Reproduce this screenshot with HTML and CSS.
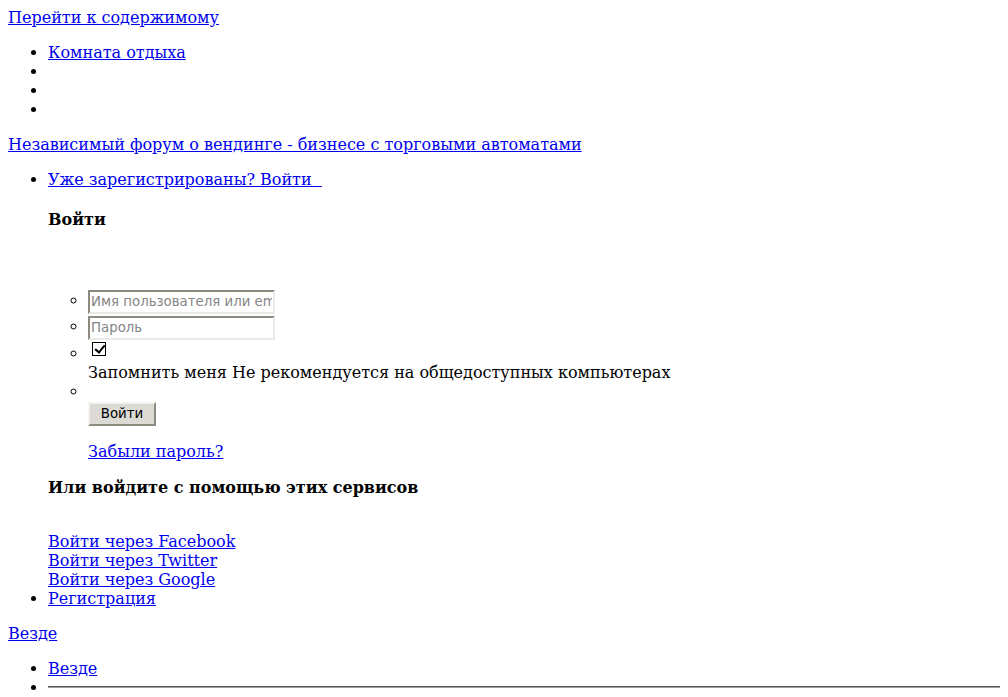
FILE: index.html
```html
<!DOCTYPE html>
<html lang="ru">
<head>
<meta charset="utf-8">
<title>Независимый форум о вендинге</title>
<link rel="stylesheet" href="styles.css">
</head>
<body class="page">
<a href="#main" class="skip-link">Перейти к содержимому</a>
<ul class="user-bar">
  <li><a href="#">Комната отдыха</a></li>
  <li></li>
  <li></li>
  <li></li>
</ul>
<a href="#" class="site-title">Независимый форум о вендинге - бизнесе с торговыми автоматами</a>
<ul class="account">
  <li>
    <a href="#">Уже зарегистрированы? Войти&nbsp;&nbsp;</a>
    <div class="login-menu">
      <h4 class="menu-title">Войти</h4>
      <form class="login-form">
        <ul class="fields">
          <li class="field-row"><input type="text" class="field" placeholder="Имя пользователя или email"></li>
          <li class="field-row"><input type="password" class="field" placeholder="Пароль"></li>
          <li><input type="checkbox" class="remember" checked><div class="remember-text">Запомнить меня Не рекомендуется на общедоступных компьютерах</div></li>
          <li><br><button type="submit" class="submit">Войти</button><p class="forgot"><a href="#">Забыли пароль?</a></p></li>
        </ul>
      </form>
      <h4 class="menu-title services-title">Или войдите с помощью этих сервисов</h4>
      <div class="services">
        <a href="#" class="service">Войти через Facebook</a>
        <a href="#" class="service">Войти через Twitter</a>
        <a href="#" class="service">Войти через Google</a>
      </div>
    </div>
  </li>
  <li><a href="#">Регистрация</a></li>
</ul>
<a href="#" class="search-scope">Везде</a>
<ul class="scope-list">
  <li><a href="#">Везде</a></li>
  <li><hr class="divider"></li>
</ul>
</body>
</html>
```
FILE: styles.css
```css
html {
  overflow: hidden;
}
.page {
  margin: 8px;
  font-family: "DejaVu Serif", serif;
  font-size: 16px;
}
.user-bar,
.account,
.scope-list {
  margin: 16px 0;
  padding-left: 40px;
}
.menu-title {
  margin: 1.33em 0;
  font-size: 16px;
  font-weight: bold;
}
.login-form {
  margin: 0;
  padding-top: 38px;
}
.fields {
  margin: 0;
  padding-left: 40px;
  list-style: circle;
}
.field {
  box-sizing: border-box;
  width: 187px;
  height: 24px;
  margin: 1px 0;
  padding: 1px 1px;
  vertical-align: middle;
  font-family: "DejaVu Sans", sans-serif;
  font-size: 13.33px;
  color: #000;
  background: #fff;
  border-style: solid;
  border-width: 2px;
  border-color: #8d8a80 #ebeae6 #ebeae6 #8d8a80;
  border-radius: 0;
  outline: none;
}
.field::placeholder {
  color: #858585;
}
.remember {
  appearance: none;
  -webkit-appearance: none;
  box-sizing: border-box;
  width: 14px;
  height: 14px;
  margin: 1px 3px 3px 4px;
  padding: 0;
  border: 1px solid #000;
  border-radius: 0;
  background: #fff;
  vertical-align: baseline;
  position: relative;
}
.remember:checked::after {
  content: "";
  position: absolute;
  left: 4px;
  top: 0px;
  width: 4px;
  height: 8px;
  border: solid #000;
  border-width: 0 2px 2px 0;
  transform: rotate(40deg);
}
.submit {
  box-sizing: border-box;
  width: 68px;
  height: 24px;
  margin: 1px 0 0;
  padding: 0 6px;
  vertical-align: top;
  font-family: "DejaVu Sans", sans-serif;
  font-size: 13.33px;
  color: #000;
  background: #dcdad5;
  border-style: solid;
  border-width: 2px;
  border-color: #f4f3f1 #8d8a80 #8d8a80 #f4f3f1;
  border-radius: 0;
}
.forgot {
  margin: 16px 0;
}
.services-title {
  margin-top: 17px;
}
.services {
  padding-top: 14px;
}
.service {
  display: block;
}
.divider {
  display: inline-block;
  box-sizing: border-box;
  width: 100%;
  height: 2px;
  margin: 0;
  vertical-align: 5px;
  border: none;
  border-top: 1px solid #555;
  border-bottom: 1px solid #a0a0a0;
}
```
